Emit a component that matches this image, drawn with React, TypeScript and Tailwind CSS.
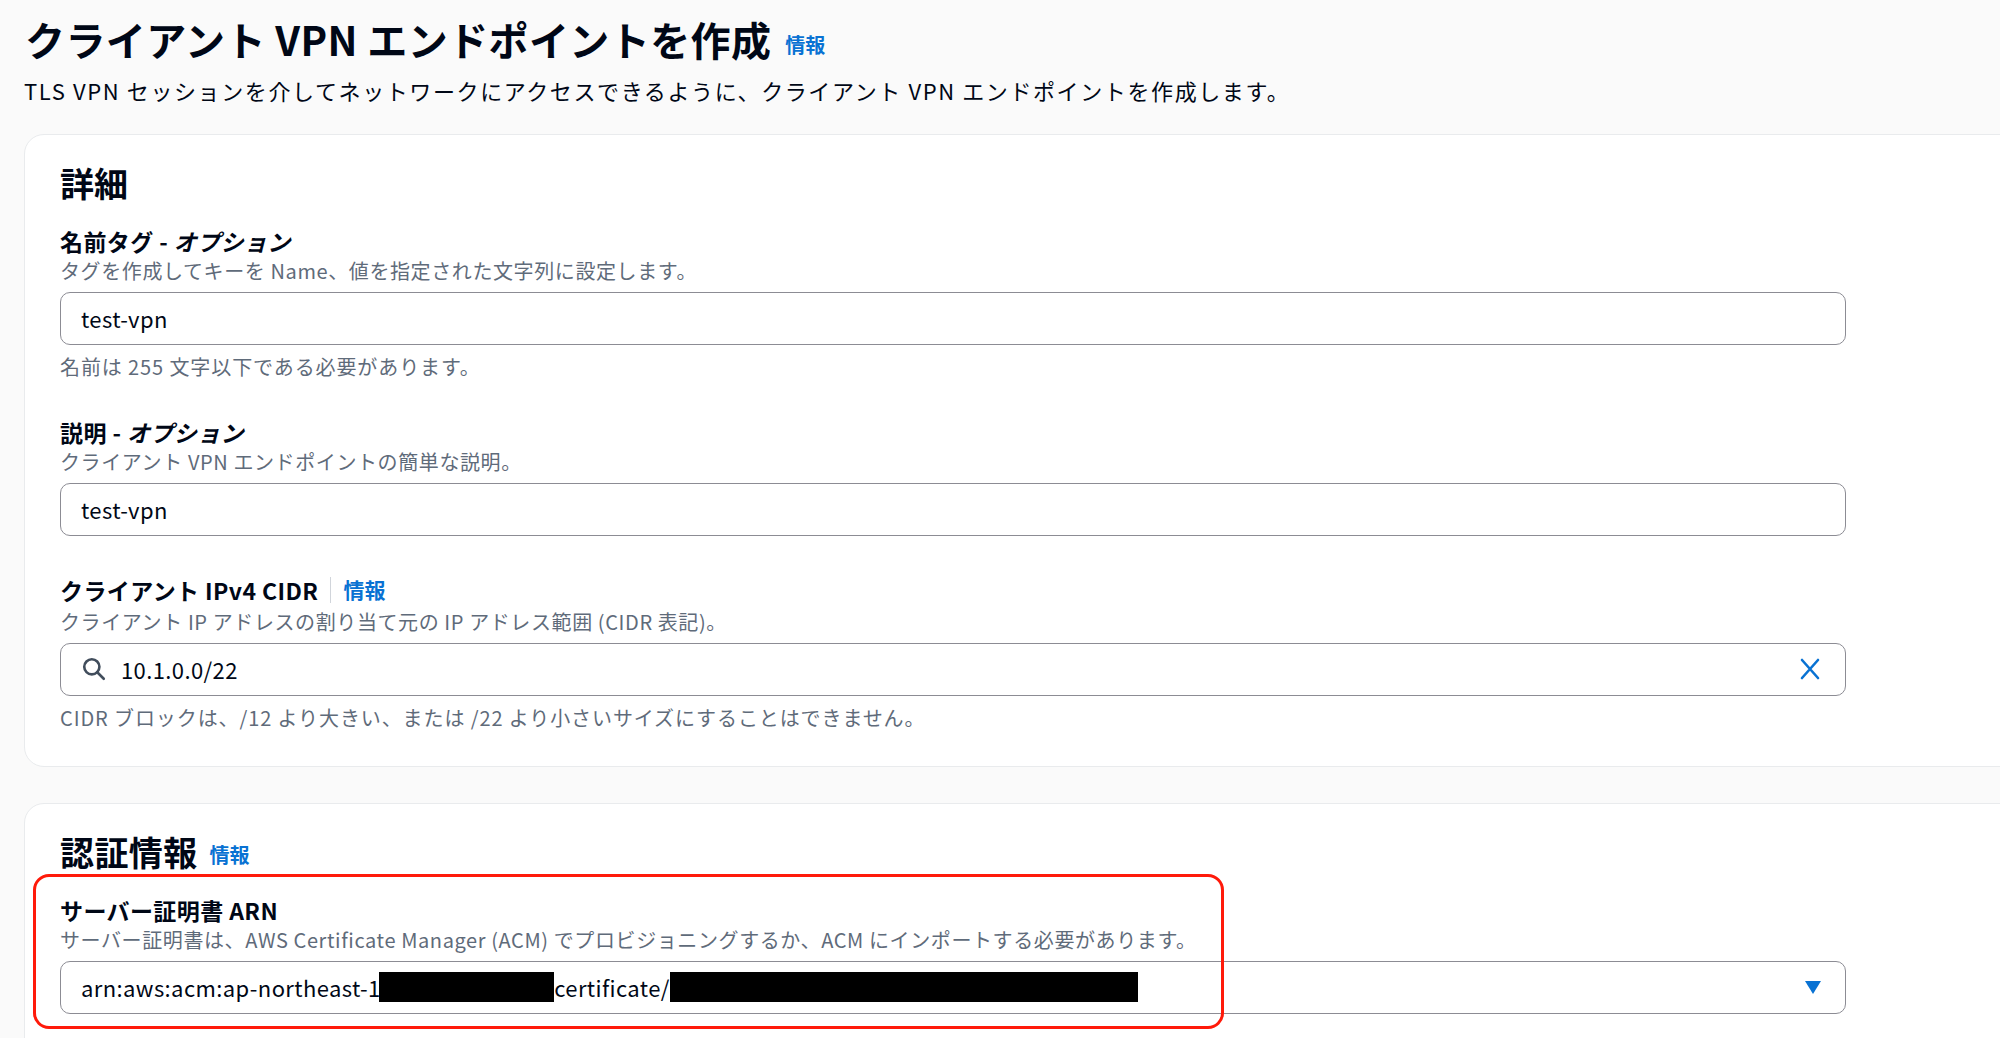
import React from "react";

const F = { fontFamily: '"Noto Sans CJK JP", "Noto Sans", sans-serif' };

function Label({ children }: { children: React.ReactNode }) {
  return <div className="text-[23px] leading-[28px] font-bold text-[#000716] tracking-[0.4px]">{children}</div>;
}
function Desc({ children }: { children: React.ReactNode }) {
  return <div className="mt-[4px] text-[20px] leading-[24px] text-[#5f6b7a] tracking-[0.6px]">{children}</div>;
}
function Input({ children }: { children: React.ReactNode }) {
  return (
    <div className="mt-[9px] h-[53px] w-[1786px] rounded-[10px] border border-[#8c8c94] bg-white flex items-center px-[20px] text-[22px] tracking-[0.4px] text-[#000716]">
      {children}
    </div>
  );
}
function Hint({ children }: { children: React.ReactNode }) {
  return <div className="mt-[10px] text-[20px] leading-[24px] text-[#5f6b7a] tracking-[0.9px]">{children}</div>;
}

export default function App() {
  return (
    <div className="w-[2000px] h-[1038px] overflow-hidden bg-[#fafafa] pl-[24px]" style={F}>
      <div className="pt-[16px] pl-[1px] flex items-end">
        <h1 className="text-[40px] leading-[46px] font-bold text-[#000716] tracking-[0.4px]">クライアント VPN エンドポイントを作成</h1>
        <span className="ml-[14px] mb-[2px] text-[20px] font-bold text-[#0972d3]">情報</span>
      </div>
      <div className="mt-[14px] text-[22px] leading-[28px] text-[#000716] tracking-[1.6px]">
        TLS VPN セッションを介してネットワークにアクセスできるように、クライアント VPN エンドポイントを作成します。
      </div>

      <div className="mt-[30px] w-[2020px] rounded-[20px] border border-[#e9ebed] bg-white pl-[35px] pt-[28px] pb-[36px]">
        <div className="text-[34px] leading-[40px] font-bold text-[#000716]">詳細</div>
        <div className="mt-[24px]">
          <Label>名前タグ - <i>オプション</i></Label>
          <Desc>タグを作成してキーを Name、値を指定された文字列に設定します。</Desc>
          <Input>test-vpn</Input>
          <Hint>名前は 255 文字以下である必要があります。</Hint>
        </div>
        <div className="mt-[39px]">
          <Label>説明 - <i>オプション</i></Label>
          <Desc>クライアント VPN エンドポイントの簡単な説明。</Desc>
          <Input>test-vpn</Input>
        </div>
        <div className="mt-[38px]">
          <div className="flex items-center">
            <Label>クライアント IPv4 CIDR</Label>
            <div className="ml-[12px] h-[26px] w-px bg-[#d1d5db]" />
            <span className="ml-[12px] text-[21px] font-bold text-[#0972d3]">情報</span>
          </div>
          <Desc>クライアント IP アドレスの割り当て元の IP アドレス範囲 (CIDR 表記)。</Desc>
          <Input>
            <svg width="26" height="26" viewBox="0 0 24 24" fill="none" stroke="#414d5c" strokeWidth="2.4" strokeLinecap="round">
              <circle cx="10" cy="10" r="7" />
              <path d="M15 15l6 6" />
            </svg>
            <span className="ml-[14px] flex-1">10.1.0.0/22</span>
            <svg width="24" height="24" viewBox="0 0 24 24" fill="none" stroke="#0972d3" strokeWidth="2.6" strokeLinecap="round" className="mr-[3px]">
              <path d="M4 3l16 18M20 3L4 21" />
            </svg>
          </Input>
          <Hint>CIDR ブロックは、/12 より大きい、または /22 より小さいサイズにすることはできません。</Hint>
        </div>
      </div>

      <div className="mt-[36px] w-[2020px] h-[400px] rounded-[20px] border border-[#e9ebed] bg-white pl-[35px] pt-[28px]">
        <div className="flex items-end">
          <div className="text-[34px] leading-[40px] font-bold text-[#000716] tracking-[0.4px]">認証情報</div>
          <span className="ml-[12px] mb-[2px] text-[20px] font-bold text-[#0972d3]">情報</span>
        </div>
        <div className="relative mt-[24px]">
          <div className="absolute left-[-27px] top-[-22px] w-[1191px] h-[155px] rounded-[16px] border-[3px] border-[#ff1a0a]" />
          <Label>サーバー証明書 ARN</Label>
          <Desc>サーバー証明書は、AWS Certificate Manager (ACM) でプロビジョニングするか、ACM にインポートする必要があります。</Desc>
          <Input>
            <span>arn:aws:acm:ap-northeast-1:</span>
            <span className="ml-[-8px] h-[30px] w-[175px] bg-black" />
            <span>certificate/</span>
            <span className="h-[30px] w-[468px] bg-black" />
            <span className="flex-1" />
            <svg width="18" height="16" viewBox="0 0 18 16" className="mr-[3px]">
              <path d="M1 2h16L9 15z" fill="#0972d3" />
            </svg>
          </Input>
        </div>
      </div>
    </div>
  );
}
